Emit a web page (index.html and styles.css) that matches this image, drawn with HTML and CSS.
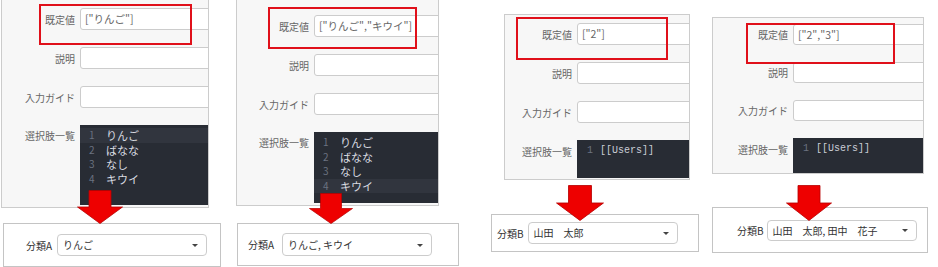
FILE: index.html
```html
<!DOCTYPE html>
<html lang="ja">

<head>
    <meta charset="UTF-8">
    <meta name="viewport" content="width=device-width, initial-scale=1.0">
    <title>既定値と選択肢</title>
    <link rel="stylesheet" href="styles.css">
</head>

<body>
    <div class="canvas">

        <div class="shot shot-1">
            <div class="form">
                <div class="mark"></div>
                <div class="row"><span class="label">既定値</span><div class="field">["りんご"]</div></div>
                <div class="row"><span class="label">説明</span><div class="field"></div></div>
                <div class="row"><span class="label">入力ガイド</span><div class="field"></div></div>
                <div class="row row-code">
                    <span class="label">選択肢一覧</span>
                    <div class="code">
                        <div class="line active"><span class="num">1</span>りんご</div>
                        <div class="line"><span class="num">2</span>ばなな</div>
                        <div class="line"><span class="num">3</span>なし</div>
                        <div class="line"><span class="num">4</span>キウイ</div>
                    </div>
                </div>
            </div>
            <div class="pick"><span class="pick-label">分類A</span><div class="select">りんご<i class="caret"></i></div></div>
            <svg class="arrow" viewBox="0 0 46 34" preserveAspectRatio="none"><polygon points="12,0.5 34,0.5 34,17 45.5,17 23,33.5 0.5,17 12,17" /></svg>
        </div>

        <div class="shot shot-2">
            <div class="form">
                <div class="mark"></div>
                <div class="row"><span class="label">既定値</span><div class="field">["りんご","キウイ"]</div></div>
                <div class="row"><span class="label">説明</span><div class="field"></div></div>
                <div class="row"><span class="label">入力ガイド</span><div class="field"></div></div>
                <div class="row row-code">
                    <span class="label">選択肢一覧</span>
                    <div class="code">
                        <div class="line"><span class="num">1</span>りんご</div>
                        <div class="line"><span class="num">2</span>ばなな</div>
                        <div class="line"><span class="num">3</span>なし</div>
                        <div class="line active"><span class="num">4</span>キウイ</div>
                    </div>
                </div>
            </div>
            <div class="pick"><span class="pick-label">分類A</span><div class="select">りんご, キウイ<i class="caret"></i></div></div>
            <svg class="arrow" viewBox="0 0 46 34" preserveAspectRatio="none"><polygon points="12,0.5 34,0.5 34,17 45.5,17 23,33.5 0.5,17 12,17" /></svg>
        </div>

        <div class="shot shot-3">
            <div class="form">
                <div class="mark"></div>
                <div class="row"><span class="label">既定値</span><div class="field">["2"]</div></div>
                <div class="row"><span class="label">説明</span><div class="field"></div></div>
                <div class="row"><span class="label">入力ガイド</span><div class="field"></div></div>
                <div class="row row-code">
                    <span class="label">選択肢一覧</span>
                    <div class="code mono">
                        <div class="line"><span class="num">1</span>[[Users]]</div>
                    </div>
                </div>
            </div>
            <div class="pick"><span class="pick-label">分類B</span><div class="select">山田　太郎<i class="caret"></i></div></div>
            <svg class="arrow" viewBox="0 0 46 34" preserveAspectRatio="none"><polygon points="12,0.5 34,0.5 34,17 45.5,17 23,33.5 0.5,17 12,17" /></svg>
        </div>

        <div class="shot shot-4">
            <div class="form">
                <div class="mark"></div>
                <div class="row"><span class="label">既定値</span><div class="field">["2","3"]</div></div>
                <div class="row"><span class="label">説明</span><div class="field"></div></div>
                <div class="row"><span class="label">入力ガイド</span><div class="field"></div></div>
                <div class="row row-code">
                    <span class="label">選択肢一覧</span>
                    <div class="code mono">
                        <div class="line"><span class="num">1</span>[[Users]]</div>
                    </div>
                </div>
            </div>
            <div class="pick"><span class="pick-label">分類B</span><div class="select">山田　太郎, 田中　花子<i class="caret"></i></div></div>
            <svg class="arrow" viewBox="0 0 46 34" preserveAspectRatio="none"><polygon points="12,0.5 34,0.5 34,17 45.5,17 23,33.5 0.5,17 12,17" /></svg>
        </div>

    </div>
</body>

</html>
```

FILE: styles.css
```css
* {
    box-sizing: border-box;
}
body {
    margin: 0;
    background-color: #fff;
    font-family: "Noto Sans CJK JP", "Noto Sans", sans-serif;
    color: #555;
}
.canvas {
    display: flex;
    align-items: flex-start;
    width: 938px;
    height: 267px;
    overflow: hidden;
}
.shot {
    position: relative;
    display: flex;
    flex-direction: column;
    align-items: flex-start;
}

/* form screenshot */
.form {
    position: relative;
    overflow: hidden;
    background: #f7f7f7;
    border: 1px solid #ccc;
    display: flex;
    flex-direction: column;
    gap: var(--gap);
    padding-top: var(--pad-top);
    padding-bottom: var(--pad-bottom);
}
.row {
    display: flex;
    align-items: center;
    height: var(--field-h);
    flex-shrink: 0;
}
.label {
    flex: 0 0 var(--label-w);
    padding-right: 5px;
    text-align: right;
    font-size: 10px;
    color: #666;
    white-space: nowrap;
}
.field {
    flex: 0 0 260px;
    height: 100%;
    background: #fff;
    border: 1px solid #ccc;
    border-radius: 3px;
    padding: 0 4px;
    font-size: 10.5px;
    line-height: calc(var(--field-h) - 2px);
    color: #666;
    white-space: nowrap;
}
.row-code {
    height: var(--code-h);
    align-items: flex-start;
}
.row-code .label {
    padding-top: var(--code-label-top);
}
.code {
    flex: 0 0 260px;
    height: 100%;
    background: #282c34;
    padding-top: var(--code-pad);
    color: #d7dae0;
    font-size: 11px;
}
.line {
    display: flex;
    height: 14.5px;
    line-height: 14.5px;
    white-space: nowrap;
}
.line.active {
    background: #31353e;
}
.num {
    width: 26px;
    padding-left: 9px;
    color: #6b7280;
    font-size: 10px;
}
.mono {
    font-family: "Liberation Mono", "DejaVu Sans Mono", monospace;
    font-size: 10px;
    color: #c8ccd4;
}
.mono .num {
    width: 23px;
    padding-left: 10px;
}
.mark {
    position: absolute;
    border: 2px solid #e0101a;
    left: var(--mark-x);
    top: var(--mark-y);
    width: var(--mark-w);
    height: var(--mark-h);
}

/* result dropdown */
.pick {
    display: flex;
    align-items: center;
    background: #fff;
    border: 1px solid #c4c4c4;
    font-size: 10px;
}
.pick-label {
    margin-right: var(--pick-gap);
    color: #333;
    white-space: nowrap;
}
.select {
    position: relative;
    width: 150px;
    height: var(--select-h);
    border: 1px solid #ccc;
    border-radius: 4px;
    padding-left: 5px;
    line-height: calc(var(--select-h) - 2px);
    color: #333;
    white-space: nowrap;
}
.caret {
    position: absolute;
    right: 8px;
    top: 50%;
    margin-top: -1px;
    border-left: 3px solid transparent;
    border-right: 3px solid transparent;
    border-top: 3px solid #444;
}

/* red arrow */
.arrow {
    position: absolute;
}
.arrow polygon {
    fill: #ee0000;
    stroke: #b80000;
    stroke-width: 0.8;
}

/* per screenshot placement */
.shot-1 {
    --pad-top: 8px;
    --pad-bottom: 2px;
    --gap: 17px;
    --field-h: 22px;
    --code-h: 80px;
    --code-pad: 3px;
    --code-label-top: 3px;
    --label-w: 78px;
    --mark-x: 37px;
    --mark-y: 4px;
    --mark-w: 153px;
    --mark-h: 41px;
    --select-h: 22px;
    --pick-gap: 5px;
}
.shot-1 .form {
    width: 208px;
    margin-left: 1px;
    border-top: none;
}
.shot-1 .pick {
    margin: 15px 0 0 3px;
    width: 218px;
    height: 44px;
    padding-left: 22px;
}
.shot-1 .arrow {
    left: 77px;
    top: 190px;
    width: 46px;
    height: 34px;
}

.shot-2 {
    --pad-top: 15px;
    --pad-bottom: 2px;
    --gap: 17px;
    --field-h: 22px;
    --code-h: 71px;
    --code-pad: 3px;
    --code-label-top: 3px;
    --label-w: 77px;
    --mark-x: 31px;
    --mark-y: 7px;
    --mark-w: 149px;
    --mark-h: 42px;
    --select-h: 23px;
    --pick-gap: 8px;
}
.shot-2 {
    margin-left: 15px;
}
.shot-2 .form {
    width: 203px;
    border-top: none;
}
.shot-2 .pick {
    margin: 17px 0 0 1px;
    width: 222px;
    height: 43px;
    padding-left: 10px;
}
.shot-2 .arrow {
    left: 73px;
    top: 193px;
    width: 44px;
    height: 31px;
}

.shot-3 {
    --pad-top: 8px;
    --pad-bottom: 1px;
    --gap: 17px;
    --field-h: 22px;
    --code-h: 38px;
    --code-pad: 4px;
    --code-label-top: 4px;
    --label-w: 72px;
    --mark-x: 11px;
    --mark-y: 2px;
    --mark-w: 152px;
    --mark-h: 43px;
    --select-h: 22px;
    --pick-gap: 4px;
}
.shot-3 {
    margin-left: 32px;
}
.shot-3 .form {
    width: 186px;
    margin: 14px 0 0 13px;
}
.shot-3 .pick {
    margin-top: 34px;
    width: 208px;
    height: 38px;
    padding-left: 5px;
}
.shot-3 .arrow {
    left: 65px;
    top: 185px;
    width: 48px;
    height: 36px;
}

.shot-4 {
    --pad-top: 6px;
    --pad-bottom: 0px;
    --gap: 17px;
    --field-h: 21px;
    --code-h: 35px;
    --code-pad: 4px;
    --code-label-top: 4px;
    --label-w: 80px;
    --mark-x: 33px;
    --mark-y: 5px;
    --mark-w: 149px;
    --mark-h: 41px;
    --select-h: 21px;
    --pick-gap: 3px;
}
.shot-4 {
    margin-left: 13px;
}
.shot-4 .form {
    width: 212px;
    margin-top: 17px;
}
.shot-4 .pick {
    margin-top: 33px;
    width: 216px;
    height: 46px;
    padding-left: 24px;
}
.shot-4 .arrow {
    left: 74px;
    top: 185px;
    width: 46px;
    height: 36px;
}
```
